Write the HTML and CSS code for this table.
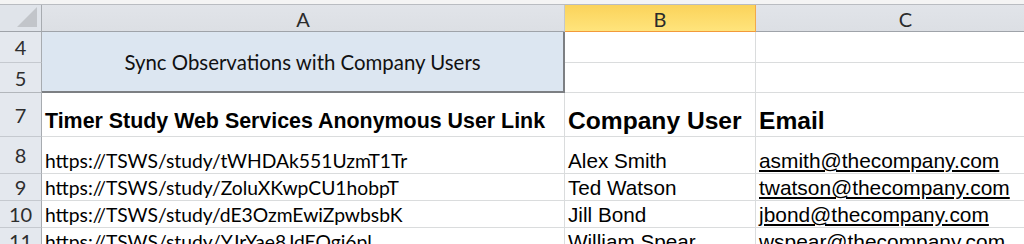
FILE: index.html
```html
<!DOCTYPE html>
<html>
<head>
<meta charset="utf-8">
<link rel="stylesheet" href="styles.css">
</head>
<body>
<div class="strip"></div>
<div class="sheet">
  <div class="corner"><div class="tri"></div></div>
  <div class="colhdr">A</div>
  <div class="colhdr sel">B</div>
  <div class="colhdr last">C</div>

  <div class="rowhdr r4">4</div>
  <div class="merged">Sync Observations with Company Users</div>
  <div class="cell r4"></div>
  <div class="cell r4 last"></div>

  <div class="rowhdr r5">5</div>
  <div class="cell r5"></div>
  <div class="cell r5 last"></div>

  <div class="rowhdr r7">7</div>
  <div class="cell r7 hd1">Timer Study Web Services Anonymous User Link</div>
  <div class="cell r7 hd2">Company User</div>
  <div class="cell r7 hd2 last">Email</div>

  <div class="rowhdr r8">8</div>
  <div class="cell r8 url">https://TSWS/study/tWHDAk551UzmT1Tr</div>
  <div class="cell r8 name">Alex Smith</div>
  <div class="cell r8 mail last">asmith@thecompany.com</div>

  <div class="rowhdr r9">9</div>
  <div class="cell r9 url">https://TSWS/study/ZoluXKwpCU1hobpT</div>
  <div class="cell r9 name">Ted Watson</div>
  <div class="cell r9 mail last">twatson@thecompany.com</div>

  <div class="rowhdr r10">10</div>
  <div class="cell r10 url">https://TSWS/study/dE3OzmEwiZpwbsbK</div>
  <div class="cell r10 name">Jill Bond</div>
  <div class="cell r10 mail last">jbond@thecompany.com</div>

  <div class="rowhdr r11">11</div>
  <div class="cell r11 url">https://TSWS/study/YJrYae8JdEOgi6pl</div>
  <div class="cell r11 name">William Spear</div>
  <div class="cell r11 mail last">wspear@thecompany.com</div>
</div>
</body>
</html>
```

FILE: styles.css
```css
html, body {
  margin: 0;
  padding: 0;
  background: #ffffff;
  overflow: hidden;
  width: 1024px;
  height: 244px;
}
.strip {
  height: 4px;
  background: #f4f4f4;
  border-bottom: 1px solid #b9bcc1;
}
.sheet {
  display: grid;
  grid-template-columns: 42px 523px 191px 300px;
  grid-template-rows: 27px 31px 30px 44px 37px 27px 27px 27px;
  font-family: "Liberation Sans", Arial, sans-serif;
  color: #000;
}
.corner {
  grid-row: 1;
  background: #e0e4ea;
  border-right: 1px solid #a7abb0;
  border-bottom: 1px solid #9fa3a9;
  position: relative;
}
.tri {
  position: absolute;
  right: 4px;
  bottom: 4px;
  width: 0;
  height: 0;
  border-left: 20px solid transparent;
  border-bottom: 20px solid #c2c5ca;
}
.colhdr {
  background: linear-gradient(#e1e4e9, #dcdfe4);
  border-right: 1px solid #c3c7cc;
  border-bottom: 1px solid #9fa3a9;
  font-family: "Lato", "Open Sans", sans-serif;
  font-size: 20px;
  color: #2b2b2b;
  display: flex;
  align-items: center;
  justify-content: center;
  padding-top: 1px;
}
.colhdr.sel {
  background: linear-gradient(#fbd35a, #ffe47c);
  border-right: 1px solid #f2a94a;
  border-bottom: 1px solid #f29a3a;
}
.rowhdr {
  grid-column: 1;
  background: #e4e8ee;
  border-right: 1px solid #a7abb0;
  border-bottom: 1px solid #c5c9cf;
  font-family: "Lato", "Open Sans", sans-serif;
  font-size: 20px;
  color: #2e2e2e;
  display: flex;
  align-items: center;
  justify-content: center;
}
.rowhdr.r5 {
  border-bottom: 1px solid #b2b6bb;
}
.cell {
  border-right: 1px solid #dadcdd;
  border-bottom: 1px solid #dadcdd;
  display: flex;
  align-items: flex-end;
  padding-left: 3px;
  white-space: nowrap;
  overflow: hidden;
}
.cell.last {
  border-right: none;
}
.merged {
  grid-column: 2;
  grid-row: 2 / span 2;
  background: #dce6f1;
  border-right: 2px solid #7c7f83;
  border-bottom: 2px solid #7c7f83;
  display: flex;
  align-items: center;
  justify-content: center;
  font-family: "Lato", "Open Sans", sans-serif;
  font-size: 20.4px;
  color: #111;
  padding-top: 1px;
}
.hd1 {
  font-weight: bold;
  font-size: 21.4px;
  padding-bottom: 2px;
}
.hd2 {
  font-weight: bold;
  font-size: 24.6px;
  padding-bottom: 1px;
}
.url {
  font-family: "Lato", "Open Sans", sans-serif;
  font-size: 19.3px;
  padding-bottom: 1px;
}
.name {
  font-size: 20.7px;
  padding-bottom: 0;
}
.mail {
  font-size: 20.9px;
  text-decoration: underline;
  text-underline-offset: 2px;
  padding-bottom: 0;
}
```
